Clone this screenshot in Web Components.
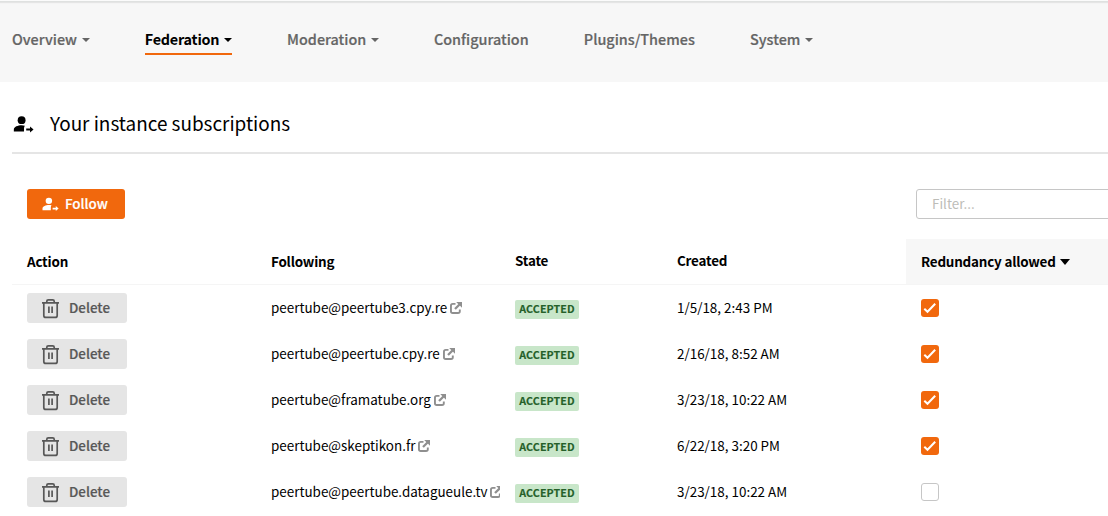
<!DOCTYPE html>
<html lang="en">
<head>
<meta charset="utf-8">
<title>Your instance subscriptions</title>
<style>
html, body { margin: 0; height: 516px; overflow: hidden; background: #fff; }
</style>
</head>
<body>
<admin-page></admin-page>
<script>
const define = (name, html, setup) => {
  const t = document.createElement('template');
  t.innerHTML = html;
  customElements.define(name, class extends HTMLElement {
    connectedCallback() {
      if (this.shadowRoot) return;
      this.attachShadow({ mode: 'open' }).append(t.content.cloneNode(true));
      if (setup) setup(this, this.shadowRoot);
    }
  });
};

define('nav-item', `
<style>
:host { display: flex; flex: none; align-items: center; box-sizing: border-box; height: 32px; padding-top: 2px; color: #656565; font-weight: 500;
  font-size: 14.4px; line-height: 22px; border-bottom: 2px solid transparent; white-space: nowrap; -webkit-text-stroke: .2px currentColor; }
:host([active]) { color: #000; font-weight: 700; border-color: #f1680d; letter-spacing: -.22px; -webkit-text-stroke: 0; }
i { display: none; margin-left: 4.500px; margin-top: 2px; border: 4px solid transparent; border-top-color: currentColor; border-bottom: 0; }
:host([menu]) i { display: block; }
</style><span><slot></slot></span><i></i>`);

define('follow-icon', `
<style>:host { display: block; width: 24px; height: 24px; } svg { display: block; width: 100%; height: 100%; }</style>
<svg viewBox="0 0 24 24" fill="currentColor"><circle cx="10.500" cy="7.8" r="4.300"/><path d="M2 20.300v-2.400C2 15 6.500 13.300 10.500 13.300c1.300 0 2.500.2 3.500.5-.6.800-.9 1.700-.9 2.700v3.800z"/><path d="M15.500 17h4.200v-2.200l3.800 3.300-3.800 3.300v-2.200h-4.200z"/></svg>`);

define('delete-button', `
<style>
:host { display: flex; align-items: center; box-sizing: border-box; width: 100px; height: 30px; padding-left: 14px; border-radius: 3px; background: #e5e5e5; color: #585858; font-weight: 500; font-size: 13.4px; line-height: 22px; -webkit-text-stroke: .2px currentColor; }
svg { width: 20px; height: 22px; margin-right: 8px; flex: none; }
span { padding-bottom: 2px; }
</style>
<svg viewBox="0 0 20 22" fill="none" stroke="#585858" stroke-width="1.700"><path d="M1 5.800h17M2.800 5.800v12.600q0 2 2 2h9.400q2 0 2-2V5.800M5.800 5.500V4.300q0-1.500 1.500-1.500h4.400q1.500 0 1.500 1.500V5.500M7.900 9.500v6.500M11.100 9.500v6.500"/></svg><span>Delete</span>`);

define('state-badge', `
<style>:host { display: flex; align-items: center; justify-content: center; box-sizing: border-box; width: 64px; height: 19px; padding-bottom: 2px; border-radius: 2px; background: #c8e6c9; color: #256029; font-size: 10.7px; font-weight: 700; line-height: 17px; letter-spacing: .08px; -webkit-text-stroke: .15px currentColor; margin-top: 2px; }</style><span><slot></slot></span>`);

define('external-link', `
<style>
:host { display: flex; align-items: center; min-width: 0; overflow: hidden; white-space: nowrap; }
span { padding-bottom: 2px; }
svg { flex: none; width: 12px; height: 12px; margin-left: 2.800px; }
</style><span><slot></slot></span>
<svg viewBox="0 0 12 12" fill="none" stroke="#8f8f8f" stroke-width="1.900"><path d="M5.500 1.900H2.700Q.95 1.900.95 3.700v5.500q0 1.800 1.800 1.800H8q1.800 0 1.800-1.800V7.500"/><path d="M5 7 10 2" stroke-width="2.300"/><path d="M6.200 0H12v5.800z" fill="#8f8f8f" stroke="none"/></svg>`);

define('check-box', `
<style>
:host { display: block; box-sizing: border-box; width: 18px; height: 18px; border: 1px solid #c6c6c6; border-radius: 3px; background: #fff; }
svg { display: none; }
:host([checked]) { border: 0; background: #f1680d; }
:host([checked]) svg { display: block; }
</style><svg width="18" height="18" viewBox="0 0 18 18" fill="none" stroke="#fff" stroke-width="2"><path d="m3.300 9.700 3.200 3.100 7.700-8"/></svg>`);

define('follow-row', `
<style>
:host { display: grid; grid-template-columns: 244px 244px 162px 244px 1fr; height: 46px; align-items: center; }
div { display: flex; align-items: center; padding-left: 15px; min-width: 0; white-space: nowrap; }
#date { padding-bottom: 2px; }
</style>
<div><delete-button></delete-button></div>
<div><external-link></external-link></div>
<div><state-badge>ACCEPTED</state-badge></div>
<div id="date"></div>
<div><check-box></check-box></div>`, (el, root) => {
  root.querySelector('external-link').textContent = el.getAttribute('host');
  root.querySelector('#date').textContent = el.getAttribute('date');
  root.querySelector('check-box').toggleAttribute('checked', el.hasAttribute('redundant'));
});

define('follow-table', `
<style>
:host { display: block; font-size: 13.43px; line-height: 22px; }
header { display: grid; grid-template-columns: 244px 244px 162px 244px 1fr; height: 46px; box-sizing: border-box; font-weight: 700; letter-spacing: -.2px; }
header div { display: flex; align-items: center; box-sizing: border-box; padding: 0 0 2px 15px; border-bottom: 1px solid #f5f5f5; white-space: nowrap; }
header .up { padding-bottom: 3px; }
header .sorted { background: #f7f7f7; }
svg { margin: 2px 0 0 4px; width: 10px; height: 6px; }
</style>
<header><div><span>Action</span></div><div><span>Following</span></div><div class="up"><span>State</span></div><div class="up"><span>Created</span></div>
<div class="sorted"><span>Redundancy allowed</span><svg viewBox="0 0 10 6"><path d="M0 0h10L5 6z"/></svg></div></header>
<slot></slot>`);

define('admin-page', `
<style>
:host { display: block; font-family: "Noto Sans CJK SC", "Noto Sans", sans-serif; color: #000; height: 516px; overflow: hidden; }
nav { display: flex; gap: 55.2px; height: 82px; box-sizing: border-box; padding: 23px 0 0 12px; background: linear-gradient(#fbfbfb 1px, #dfe1e0 1px 2px, #e5e5e5 2px 3px, #f4f4f4 3px 4px, #f7f7f7 4px); }
main { padding-left: 12px; }
h1 { display: flex; align-items: center; box-sizing: border-box; height: 72px; margin: 0; padding-top: 14px; border-bottom: 2px solid #e5e5e5; font-size: 18.92px; line-height: 28px; font-weight: 400; }
h1 follow-icon { width: 22px; height: 22px; margin-right: 16px; }
h1 span { padding-bottom: 2px; }
.tools { display: flex; justify-content: space-between; height: 30px; padding: 35px 0 20px 15px; }
.follow { display: flex; align-items: center; box-sizing: border-box; width: 98px; height: 30px; padding-left: 14px; border-radius: 3px; background: #f1680d; color: #fff; font-weight: 500; font-size: 13.4px; line-height: 22px; -webkit-text-stroke: .2px currentColor; }
.follow follow-icon { width: 18px; height: 18px; margin-right: 6px; }
.follow span, .filter span { padding-bottom: 2px; }
.filter { display: flex; align-items: center; box-sizing: border-box; width: 220px; height: 30px; margin-right: -28px; padding-left: 15px; border: 1px solid #c6c6c6; border-radius: 3px; color: #bdbdb8; font-size: 13.4px; line-height: 22px; }
</style>
<nav><nav-item menu>Overview</nav-item><nav-item menu active>Federation</nav-item><nav-item menu>Moderation</nav-item><nav-item>Configuration</nav-item><nav-item>Plugins/Themes</nav-item><nav-item menu>System</nav-item></nav>
<main>
<h1><follow-icon></follow-icon><span>Your instance subscriptions</span></h1>
<div class="tools"><div class="follow"><follow-icon></follow-icon><span>Follow</span></div><div class="filter"><span>Filter...</span></div></div>
<follow-table>
<follow-row host="peertube@peertube3.cpy.re" date="1/5/18, 2:43 PM" redundant></follow-row>
<follow-row host="peertube@peertube.cpy.re" date="2/16/18, 8:52 AM" redundant></follow-row>
<follow-row host="peertube@framatube.org" date="3/23/18, 10:22 AM" redundant></follow-row>
<follow-row host="peertube@skeptikon.fr" date="6/22/18, 3:20 PM" redundant></follow-row>
<follow-row host="peertube@peertube.datagueule.tv" date="3/23/18, 10:22 AM"></follow-row>
</follow-table>
</main>`);
</script>
</body>
</html>
